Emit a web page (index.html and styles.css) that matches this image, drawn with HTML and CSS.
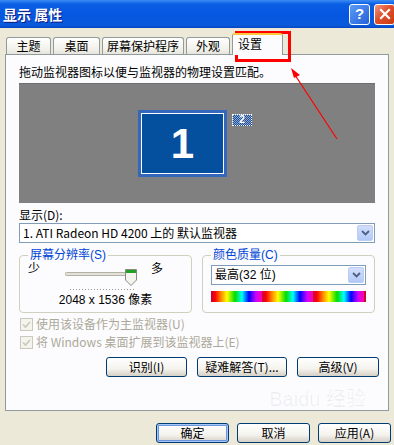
FILE: index.html
```html
<!DOCTYPE html>
<html lang="zh-CN">
<head>
    <meta charset="UTF-8">
    <title>显示 属性</title>
    <link rel="stylesheet" href="styles.css">
</head>
<body>
    <div class="titlebar">
        <span class="title">显示 属性</span>
        <div class="title-buttons">
            <span class="tbtn help">?</span>
            <span class="tbtn close">
                <svg width="12" height="12" viewBox="0 0 12 12"><path d="M2 2 L10 10 M10 2 L2 10" stroke="#fff" stroke-width="2.2" stroke-linecap="square"/></svg>
            </span>
        </div>
    </div>

    <div class="tabs">
        <div class="tab" style="width:45px">主题</div>
        <div class="tab" style="width:47px">桌面</div>
        <div class="tab" style="width:82px">屏幕保护程序</div>
        <div class="tab" style="width:44px">外观</div>
        <div class="tab active">设置</div>
    </div>

    <div class="panel">
        <p class="hint">拖动监视器图标以便与监视器的物理设置匹配。</p>

        <div class="preview">
            <div class="monitor one"><div class="screen">1</div></div>
            <div class="monitor two">2</div>
        </div>

        <p class="label">显示(D):</p>
        <div class="select">
            <span>1. ATI Radeon HD 4200 上的 默认监视器</span>
            <span class="drop">
                <svg width="9" height="6" viewBox="0 0 9 6"><path d="M1 1 L4.5 4.5 L8 1" fill="none" stroke="#4d6185" stroke-width="1.8"/></svg>
            </span>
        </div>

        <div class="groups">
            <fieldset class="group">
                <legend>屏幕分辨率(S)</legend>
                <div class="slider-row">
                    <span>少</span>
                    <svg class="slider" width="72" height="30" viewBox="0 0 72 30">
                        <rect x="0" y="12.5" width="64" height="3" rx="1.5" fill="#e4e2d8" stroke="#b4b2a6"/>
                        <line x1="5" y1="29.5" x2="70" y2="29.5" stroke="#9a9890" stroke-dasharray="1 2"/>
                        <path d="M60.5 9.5 H71.5 V20 L66 25.5 L60.5 20 Z" fill="#f4f3ee" stroke="#8a8a80"/>
                        <rect x="61" y="10" width="10" height="3" fill="#21a121"/>
                    </svg>
                    <span class="more">多</span>
                </div>
                <p class="res">2048 x 1536 像素</p>
            </fieldset>
            <fieldset class="group">
                <legend>颜色质量(C)</legend>
                <div class="select small">
                    <span>最高(32 位)</span>
                    <span class="drop">
                        <svg width="9" height="6" viewBox="0 0 9 6"><path d="M1 1 L4.5 4.5 L8 1" fill="none" stroke="#4d6185" stroke-width="1.8"/></svg>
                    </span>
                </div>
                <div class="colorbar"></div>
            </fieldset>
        </div>

        <div class="check">
            <svg width="13" height="13" viewBox="0 0 13 13"><rect x="0.5" y="0.5" width="12" height="12" fill="#f4f3ee" stroke="#cac8bb"/><path d="M3 6.5 L5.5 9 L10 4" fill="none" stroke="#cac8bb" stroke-width="1.6"/></svg>
            <span>使用该设备作为主监视器(U)</span>
        </div>
        <div class="check">
            <svg width="13" height="13" viewBox="0 0 13 13"><rect x="0.5" y="0.5" width="12" height="12" fill="#f4f3ee" stroke="#cac8bb"/><path d="M3 6.5 L5.5 9 L10 4" fill="none" stroke="#cac8bb" stroke-width="1.6"/></svg>
            <span>将 Windows 桌面扩展到该监视器上(E)</span>
        </div>

        <div class="actions">
            <button class="btn" style="width:81px">识别(I)</button>
            <button class="btn" style="width:90px">疑难解答(T)...</button>
            <button class="btn" style="width:82px">高级(V)</button>
        </div>

        <div class="watermark">Bai<b>du</b> 经验</div>
    </div>

    <div class="footer">
        <button class="btn default">确定</button>
        <button class="btn">取消</button>
        <button class="btn">应用(A)</button>
    </div>

    <div class="marker"></div>
    <svg class="arrow" width="394" height="445" viewBox="0 0 394 445">
        <line x1="337" y1="139" x2="295" y2="75" stroke="#f00" stroke-width="1.2"/>
        <path d="M291 68 L300 75 L294 78 Z" fill="#f00"/>
    </svg>
</body>
</html>
```

FILE: styles.css
```css
body {
    margin: 0;
    width: 394px;
    height: 445px;
    overflow: hidden;
    position: relative;
    background-color: #ece9d8;
    font-family: "Noto Sans CJK SC", sans-serif;
    font-size: 12px;
    line-height: 14px;
    color: #000;
}

p {
    margin: 0;
}

.titlebar {
    height: 28px;
    display: flex;
    align-items: center;
    justify-content: space-between;
    background: linear-gradient(#3d8cf5 0, #0a5fe4 4px, #0556e0 55%, #0a5adb 90%, #0545c2 100%);
}

.title {
    padding-left: 3px;
    color: #fff;
    font-weight: bold;
    font-size: 14px;
    text-shadow: 1px 1px 0 #0a1a80;
}

.title-buttons {
    display: flex;
    gap: 4px;
    margin-right: -1px;
}

.tbtn {
    width: 19px;
    height: 19px;
    border: 1px solid #fff;
    border-radius: 3px;
    display: flex;
    align-items: center;
    justify-content: center;
    color: #fff;
    font-family: "Liberation Sans", sans-serif;
    font-weight: bold;
    font-size: 15px;
}

.help {
    background: linear-gradient(135deg, #5c9bf7, #2360d8);
}

.close {
    background: linear-gradient(135deg, #f09a80, #e0502c 45%, #c93a12);
}

.tabs {
    display: flex;
    align-items: flex-end;
    gap: 2px;
    height: 20px;
    margin-top: 6px;
    padding-left: 6px;
    position: relative;
    z-index: 1;
}

.tab {
    height: 17px;
    box-sizing: border-box;
    border: 1px solid #919b9c;
    border-bottom: none;
    border-radius: 3px 3px 0 0;
    background: linear-gradient(#fff, #f2f1ea 70%, #e6e5dc);
    text-align: center;
    line-height: 16px;
}

.tab.active {
    width: 51px;
    height: 22px;
    margin-bottom: -1px;
    background: #fcfcfe;
    border-top: 2px solid #ffc83c;
    text-align: left;
    padding-left: 5px;
    line-height: 18px;
}

.panel {
    margin: 0 5px;
    height: 357px;
    box-sizing: border-box;
    border: 1px solid #919b9c;
    background-color: #fcfcfe;
    padding: 10px 13px 0;
    position: relative;
}

.preview {
    position: relative;
    margin-top: 4px;
    height: 120px;
    background-color: #808080;
    border-top: 1px solid #6e6e6e;
    box-sizing: border-box;
}

.monitor {
    position: absolute;
}

.monitor.one {
    left: 119px;
    top: 26px;
    width: 89px;
    height: 67px;
    padding: 3px;
    box-sizing: border-box;
    background-color: #3468bd;
}

.screen {
    height: 100%;
    border: 1px solid #fff;
    box-sizing: border-box;
    background-color: #05509e;
    color: #fff;
    font-family: "Liberation Sans", sans-serif;
    font-weight: bold;
    font-size: 42px;
    display: flex;
    align-items: center;
    justify-content: center;
}

.monitor.two {
    left: 213px;
    top: 30px;
    width: 20px;
    height: 12px;
    box-sizing: border-box;
    border: 1px dotted #fff;
    background: repeating-conic-gradient(#1e4f96 0 25%, #8ea6cc 0 50%) 0 0 / 2px 2px;
    color: #fff;
    font-family: "Liberation Sans", sans-serif;
    font-weight: bold;
    font-size: 10px;
    line-height: 10px;
    text-align: center;
}

.label {
    margin-top: 5px;
}

.select {
    margin-top: 1px;
    height: 20px;
    box-sizing: border-box;
    border: 1px solid #7f9db9;
    background-color: #fff;
    display: flex;
    align-items: center;
    justify-content: space-between;
    padding: 0 1px 0 3px;
}

.drop {
    width: 16px;
    height: 16px;
    box-sizing: border-box;
    border: 1px solid #b9cdf6;
    border-radius: 2px;
    background: linear-gradient(#d2defb, #b3c9f7);
    display: flex;
    align-items: center;
    justify-content: center;
}

.groups {
    display: flex;
    gap: 10px;
    margin-top: 6px;
}

.group {
    width: 173px;
    margin: 0;
    padding: 0 8px 5px;
    box-sizing: border-box;
    border: 1px solid #d0d0bf;
    border-radius: 4px;
    font-family: "Liberation Sans", "Noto Sans CJK SC", sans-serif;
}

.group legend {
    padding: 0 2px;
    margin-left: 0;
    color: #0046d5;
    line-height: 12px;
}

.slider-row {
    display: flex;
    align-items: flex-start;
    height: 27px;
    padding-top: 2px;
    line-height: 12px;
}

.slider {
    margin-left: 25px;
    margin-top: -3px;
}

.more {
    margin-left: 14px;
}

.res {
    margin-top: 3px;
    text-align: center;
}

.select.small {
    margin-top: 4px;
}

.colorbar {
    margin-top: 6px;
    height: 11px;
    background: repeating-linear-gradient(90deg, #c00040 0, #f00 4px, #f80 10px, #ff0 16px, #0d0 24px, #0ff 31px, #00f 38px, #c0f 45px, #f0a 51px);
}

.check {
    display: flex;
    align-items: center;
    gap: 3px;
    margin-top: 4px;
    padding-left: 1px;
    color: #aca899;
}

.check:first-of-type {
    margin-top: 5px;
}

.actions {
    display: flex;
    justify-content: flex-end;
    gap: 10px;
    margin-top: 8px;
    margin-right: -4px;
}

.btn {
    height: 20px;
    padding: 0;
    box-sizing: border-box;
    border: 1px solid #003c74;
    border-radius: 3px;
    background: linear-gradient(#fff, #f4f3ee 60%, #d6d0c5);
    font-family: "Noto Sans CJK SC", sans-serif;
    font-size: 12px;
    line-height: 16px;
    color: #000;
}

.watermark {
    position: absolute;
    right: 22px;
    bottom: 4px;
    font-family: "Liberation Sans", sans-serif;
    font-size: 20px;
    color: rgba(0, 0, 0, 0.06);
}

.watermark b {
    font-weight: normal;
}

.footer {
    display: flex;
    justify-content: flex-end;
    gap: 8px;
    margin-top: 12px;
    padding-right: 3px;
}

.footer .btn {
    width: 73px;
}

.footer .default {
    box-shadow: inset 0 0 0 1px #a8c6f2, inset 0 0 0 2px #6b95e0;
}

.marker {
    position: absolute;
    left: 235px;
    top: 31px;
    width: 56px;
    height: 31px;
    box-sizing: border-box;
    border: 3px solid #f00;
}

.arrow {
    position: absolute;
    left: 0;
    top: 0;
    pointer-events: none;
}
```
